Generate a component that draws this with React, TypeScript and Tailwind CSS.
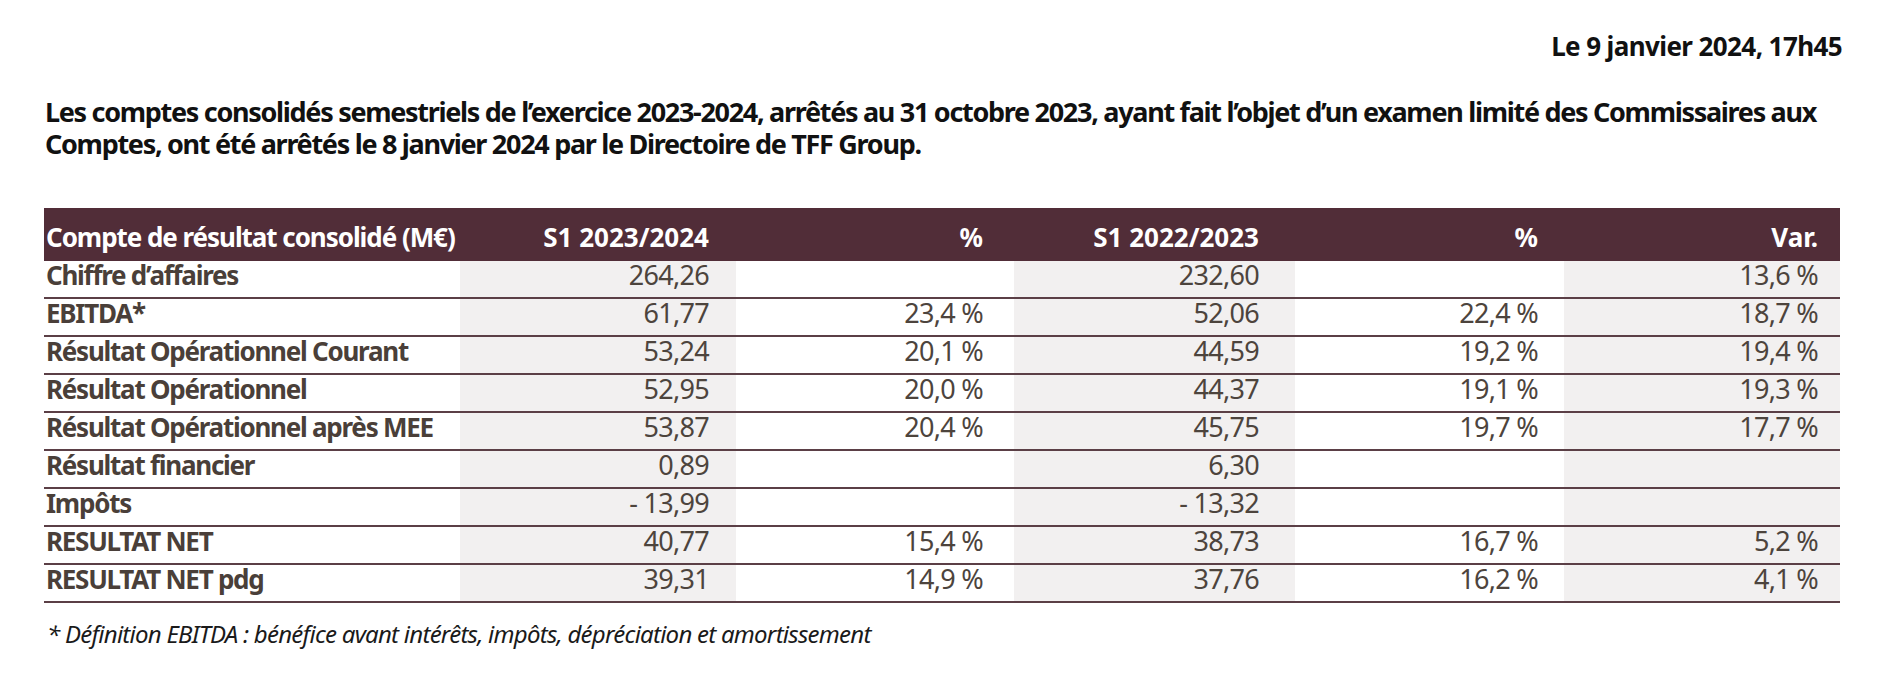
import React from "react"

const rows = [
    ["Chiffre d’affaires", "264,26", "", "232,60", "", "13,6 %"],
    ["EBITDA*", "61,77", "23,4 %", "52,06", "22,4 %", "18,7 %"],
    ["Résultat Opérationnel Courant", "53,24", "20,1 %", "44,59", "19,2 %", "19,4 %"],
    ["Résultat Opérationnel", "52,95", "20,0 %", "44,37", "19,1 %", "19,3 %"],
    ["Résultat Opérationnel après MEE", "53,87", "20,4 %", "45,75", "19,7 %", "17,7 %"],
    ["Résultat financier", "0,89", "", "6,30", "", ""],
    ["Impôts", "- 13,99", "", "- 13,32", "", ""],
    ["RESULTAT NET", "40,77", "15,4 %", "38,73", "16,7 %", "5,2 %"],
    ["RESULTAT NET pdg", "39,31", "14,9 %", "37,76", "16,2 %", "4,1 %"],
]

const headers = ["Compte de résultat consolidé (M€)", "S1 2023/2024", "%", "S1 2022/2023", "%", "Var."]

// right padding per column so the figures line up with the headers
const colPad = ["pl-[2px]", "pr-[27px]", "pr-[31px]", "pr-[36px]", "pr-[26px]", "pr-[22px]"]
const colBg = ["bg-white", "bg-[#f2f0f0]", "bg-white", "bg-[#f2f0f0]", "bg-white", "bg-[#f2f0f0]"]

export default function App() {
    return (
        <div className="min-h-[678px] bg-white font-['Noto_Sans',sans-serif] [font-stretch:condensed] pl-[44px] pr-[36px] pt-[30px]">
            <div className="text-right text-[26px] leading-[32px] font-bold tracking-[-0.6px] text-[#111]">Le 9 janvier 2024, 17h45</div>

            <p className="mt-[34px] pl-[1px] text-[27px] leading-[32px] font-bold tracking-[-1.3px] text-[#111]">
                Les comptes consolidés semestriels de l’exercice 2023-2024, arrêtés au 31 octobre 2023, ayant fait l’objet d’un examen limité des Commissaires aux Comptes, ont été arrêtés le 8 janvier 2024 par le Directoire de TFF Group.
            </p>

            {/* Table */}
            <div className="mt-[48px] w-[1796px]">
                <div className="grid grid-cols-[416px_276px_278px_281px_269px_276px] h-[53px] bg-[#512d38] text-white font-bold text-[26px] leading-[30px] pt-[14px]">
                    {headers.map((h, i) => (
                        <div key={i} className={`whitespace-nowrap ${i === 0 ? "text-left tracking-[-1.05px]" : "text-right"} ${colPad[i]}`}>{h}</div>
                    ))}
                </div>
                {rows.map((r, ri) => (
                    <div key={ri} className="grid grid-cols-[416px_276px_278px_281px_269px_276px] border-b-2 border-[#5b3f46]">
                        {r.map((c, ci) => (
                            <div
                                key={ci}
                                className={`h-[36px] whitespace-nowrap leading-[28px] ${colBg[ci]} ${colPad[ci]} ${ci === 0 ? "text-left text-[26px] font-bold tracking-[-1.25px] text-[#4a3f39]" : "text-right text-[27px] tracking-[-0.7px] text-[#4d443d]"}`}
                            >
                                {c}
                            </div>
                        ))}
                    </div>
                ))}
            </div>

            <p className="mt-[16px] pl-[3px] italic text-[24px] leading-[30px] tracking-[-0.75px] text-[#1a1a1a]">
                * Définition EBITDA : bénéfice avant intérêts, impôts, dépréciation et amortissement
            </p>
        </div>
    )
}
